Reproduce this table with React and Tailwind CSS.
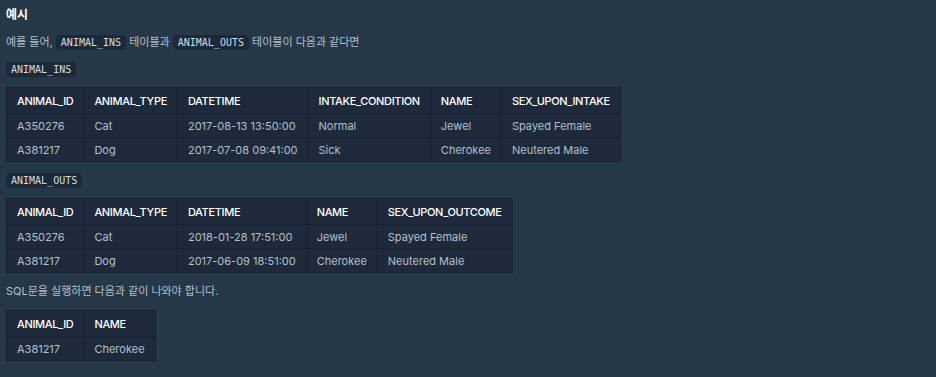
const ins = {
  cols: ["ANIMAL_ID", "ANIMAL_TYPE", "DATETIME", "INTAKE_CONDITION", "NAME", "SEX_UPON_INTAKE"],
  rows: [
    ["A350276", "Cat", "2017-08-13 13:50:00", "Normal", "Jewel", "Spayed Female"],
    ["A381217", "Dog", "2017-07-08 09:41:00", "Sick", "Cherokee", "Neutered Male"],
  ],
};

const outs = {
  cols: ["ANIMAL_ID", "ANIMAL_TYPE", "DATETIME", "NAME", "SEX_UPON_OUTCOME"],
  rows: [
    ["A350276", "Cat", "2018-01-28 17:51:00", "Jewel", "Spayed Female"],
    ["A381217", "Dog", "2017-06-09 18:51:00", "Cherokee", "Neutered Male"],
  ],
};

const result = {
  cols: ["ANIMAL_ID", "NAME"],
  rows: [["A381217", "Cherokee"]],
};

function Code({ children }) {
  return (
    <code className="rounded-[4px] bg-[#1c2938] px-[5px] py-[2px] font-['DejaVu_Sans_Mono',monospace] text-[10px] text-[#d4dce4]">
      {children}
    </code>
  );
}

function DataTable({ data }) {
  return (
    <table className="border-collapse bg-[#1e2a3b] text-[11px] leading-[14px]">
      <thead>
        <tr>
          {data.cols.map((c) => (
            <th
              key={c}
              className="h-[26px] border border-[#172231] px-[10px] text-left font-medium tracking-[-0.35px] text-white"
            >
              {c}
            </th>
          ))}
        </tr>
      </thead>
      <tbody>
        {data.rows.map((r) => (
          <tr key={r[0]}>
            {r.map((v, i) => (
              <td
                key={i}
                className="h-[24px] border border-[#172231] px-[10px] text-[#b2c0cc]"
              >
                {v}
              </td>
            ))}
          </tr>
        ))}
      </tbody>
    </table>
  );
}

export default function App() {
  return (
    <div className="h-[377px] w-[936px] overflow-hidden bg-[#263747] px-[6px] pt-[5px] font-['Inter','Noto_Sans_CJK_KR',sans-serif] text-[11px] leading-[20px] text-[#b2c0cc]">
      <h5 className="text-[12px] font-bold text-white">예시</h5>
      <p className="mt-[7px]">
        예를 들어, <Code>ANIMAL_INS</Code> 테이블과 <Code>ANIMAL_OUTS</Code> 테이블이 다음과 같다면
      </p>
      <div className="mt-[6px] leading-[20px]">
        <Code>ANIMAL_INS</Code>
      </div>
      <div className="mt-[7px]">
        <DataTable data={ins} />
      </div>
      <div className="mt-[8px] leading-[20px]">
        <Code>ANIMAL_OUTS</Code>
      </div>
      <div className="mt-[7px]">
        <DataTable data={outs} />
      </div>
      <p className="mt-[8px]">SQL문을 실행하면 다음과 같이 나와야 합니다.</p>
      <div className="mt-[9px]">
        <DataTable data={result} />
      </div>
    </div>
  );
}
